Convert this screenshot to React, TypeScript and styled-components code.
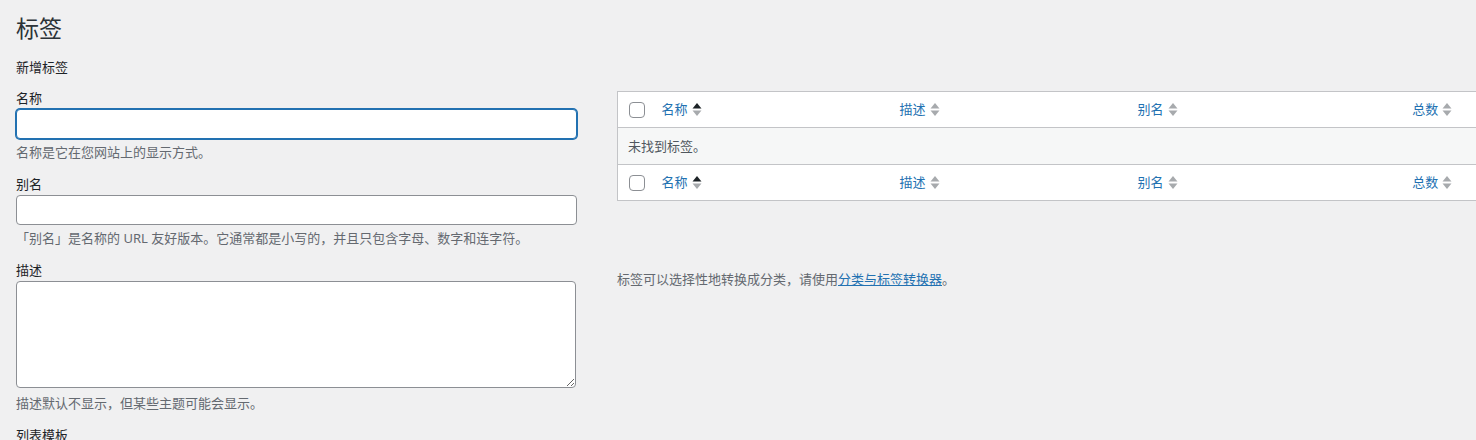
import React from "react";
import styled, { createGlobalStyle } from "styled-components";

const GlobalStyle = createGlobalStyle`
  html, body {
    margin: 0;
    padding: 0;
    background: #f0f0f1;
    overflow: hidden;
  }
  body {
    font-family: "Noto Sans", "Noto Sans CJK SC", sans-serif;
    font-size: 13px;
    line-height: 1.4;
    color: #1d2327;
  }
`;

const Wrap = styled.div`
  padding: 13px 0 0 16px;
  width: 1520px;
`;

const Title = styled.h1`
  margin: 0;
  font-size: 23px;
  font-weight: 400;
  line-height: 30px;
  color: #2c3338;
`;

const Columns = styled.div`
  display: flex;
  gap: 40px;
  align-items: flex-start;
`;

const LeftCol = styled.div`
  width: 561px;
  flex-shrink: 0;
`;

const RightCol = styled.div`
  padding-top: 48px;
`;

const FormTitle = styled.h2`
  margin: 15px 0 13px;
  font-size: 13px;
  font-weight: 400;
  line-height: 18px;
`;

const Field = styled.div`
  margin-bottom: 14px;
`;

const Label = styled.label`
  display: block;
  line-height: 18px;
  margin-bottom: 2px;
`;

const TextInput = styled.input<{ $focused?: boolean }>`
  display: block;
  box-sizing: border-box;
  width: 100%;
  height: 30px;
  margin: 0;
  padding: 0 8px;
  background: #fff;
  border: 1px solid ${(p) => (p.$focused ? "#2271b1" : "#8c8f94")};
  border-radius: 4px;
  box-shadow: ${(p) => (p.$focused ? "0 0 0 1px #2271b1" : "none")};
  outline: none;
  font: inherit;
`;

const TextArea = styled.textarea`
  display: block;
  box-sizing: border-box;
  width: 560px;
  height: 107px;
  margin: 0;
  padding: 2px 6px;
  background: #fff;
  border: 1px solid #8c8f94;
  border-radius: 4px;
  font: inherit;
  outline: none;
`;

const Help = styled.p<{ $gap?: number }>`
  margin: ${(p) => p.$gap ?? 4}px 0 0;
  line-height: 18px;
  color: #646970;
`;

const Table = styled.table`
  border-collapse: collapse;
  table-layout: fixed;
  width: 880px;
  background: #fff;
  border: 1px solid #c3c4c7;
`;

const HeadRow = styled.tr`
  height: 36px;
`;

const CheckCell = styled.td`
  width: 36px;
  padding: 0 0 0 11px;
  box-sizing: border-box;
  vertical-align: middle;
`;

const Checkbox = styled.span`
  display: block;
  width: 16px;
  height: 16px;
  box-sizing: border-box;
  border: 1px solid #8c8f94;
  border-radius: 4px;
  background: #fff;
`;

const HeadCell = styled.th<{ $w: number; $center?: boolean }>`
  width: ${(p) => p.$w}px;
  box-sizing: border-box;
  padding: 0 8px;
  font-weight: 400;
  text-align: ${(p) => (p.$center ? "center" : "left")};
  vertical-align: middle;
`;

const SortLink = styled.a`
  display: inline-flex;
  align-items: center;
  gap: 4px;
  color: #2271b1;
  text-decoration: none;
  line-height: 18px;
`;

const EmptyRow = styled.tr`
  background: #f6f7f7;
  border-top: 1px solid #c3c4c7;
  border-bottom: 1px solid #c3c4c7;
  height: 37px;
`;

const EmptyCell = styled.td`
  padding: 0 10px;
  color: #50575e;
  vertical-align: middle;
`;

const Note = styled.p`
  margin: 69px 0 0;
  line-height: 18px;
  color: #646970;
`;

const NoteLink = styled.a`
  color: #2271b1;
  text-decoration: underline;
`;

const SortIcon = ({ active }: { active?: boolean }) => (
  <svg width="10" height="15" viewBox="0 0 10 15">
    <polygon points="0.5,6.5 5,1 9.5,6.5" fill={active ? "#1d2327" : "#a7aaad"} />
    <polygon points="0.5,8.5 9.5,8.5 5,14" fill="#a7aaad" />
  </svg>
);

const columns = [
  { key: "name", label: "名称", w: 238, active: true },
  { key: "description", label: "描述", w: 238 },
  { key: "slug", label: "别名", w: 238 },
  { key: "count", label: "总数", w: 130, center: true },
];

const HeaderCells = () => (
  <HeadRow>
    <CheckCell>
      <Checkbox />
    </CheckCell>
    {columns.map((c) => (
      <HeadCell key={c.key} $w={c.w} $center={c.center}>
        <SortLink href="#">
          {c.label}
          <SortIcon active={c.active} />
        </SortLink>
      </HeadCell>
    ))}
  </HeadRow>
);

export default function App() {
  return (
    <>
      <GlobalStyle />
      <Wrap>
        <Title>标签</Title>
        <Columns>
          <LeftCol>
            <FormTitle>新增标签</FormTitle>
            <Field>
              <Label>名称</Label>
              <TextInput $focused />
              <Help>名称是它在您网站上的显示方式。</Help>
            </Field>
            <Field>
              <Label>别名</Label>
              <TextInput />
              <Help>「别名」是名称的 URL 友好版本。它通常都是小写的，并且只包含字母、数字和连字符。</Help>
            </Field>
            <Field>
              <Label>描述</Label>
              <TextArea />
              <Help $gap={6}>描述默认不显示，但某些主题可能会显示。</Help>
            </Field>
            <Field>
              <Label>列表模板</Label>
            </Field>
          </LeftCol>
          <RightCol>
            <Table>
              <thead>
                <HeaderCells />
              </thead>
              <tbody>
                <EmptyRow>
                  <EmptyCell colSpan={5}>未找到标签。</EmptyCell>
                </EmptyRow>
              </tbody>
              <tfoot>
                <HeaderCells />
              </tfoot>
            </Table>
            <Note>
              标签可以选择性地转换成分类，请使用<NoteLink href="#">分类与标签转换器</NoteLink>。
            </Note>
          </RightCol>
        </Columns>
      </Wrap>
    </>
  );
}
